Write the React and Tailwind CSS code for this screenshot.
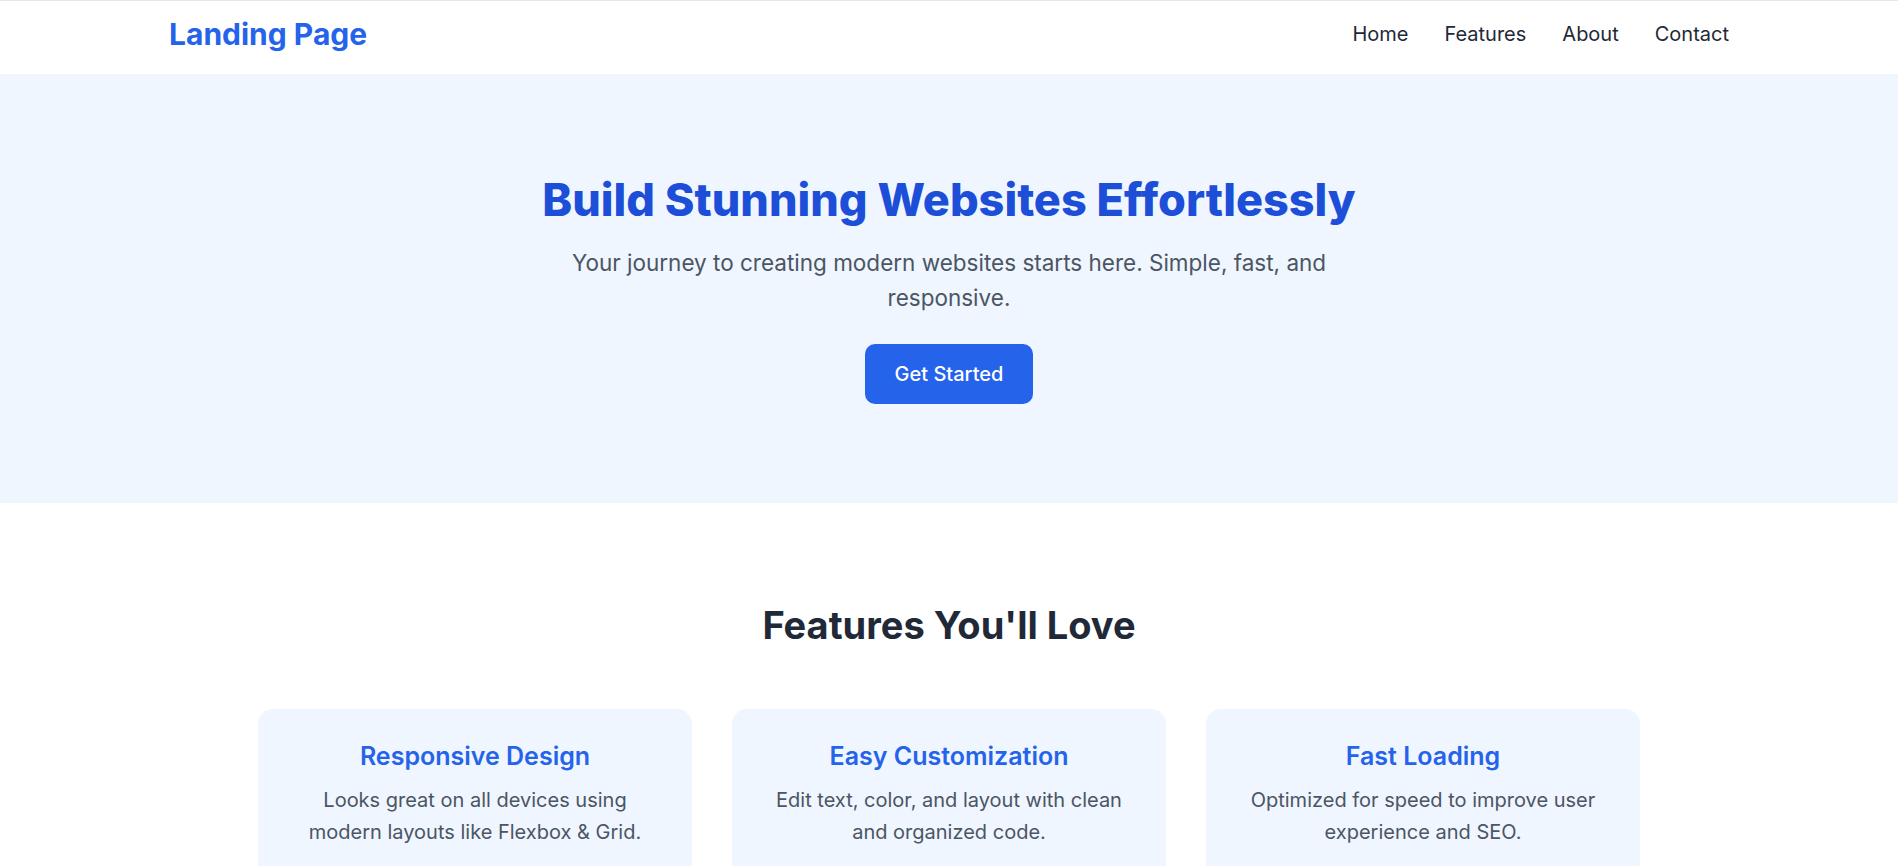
import React from 'react';

const features = [
    {
        title: 'Responsive Design',
        text: 'Looks great on all devices using modern layouts like Flexbox & Grid.',
    },
    {
        title: 'Easy Customization',
        text: 'Edit text, color, and layout with clean and organized code.',
    },
    {
        title: 'Fast Loading',
        text: 'Optimized for speed to improve user experience and SEO.',
    },
];

const App = () => {
    return (
        <div className="min-h-screen bg-white font-['Inter',sans-serif]">
            <header className="bg-white border-t border-[#e5e7eb]">
                <div className="max-w-[1600px] mx-auto px-5 pt-[13px] pb-5 flex items-center justify-between">
                    <a href="#" className="text-[30px] leading-[40px] font-bold text-[#2563eb]">
                        Landing Page
                    </a>
                    <nav className="flex items-center gap-[36px] text-[20px] leading-[30px] text-[#1f2937]">
                        <a href="#">Home</a>
                        <a href="#">Features</a>
                        <a href="#">About</a>
                        <a href="#">Contact</a>
                    </nav>
                </div>
            </header>

            <section className="bg-[#eff6ff] pt-[101px] pb-[99px] px-5 text-center">
                <h1 className="text-[45px] leading-[50px] font-extrabold text-[#1d4ed8] mb-5">
                    Build Stunning Websites Effortlessly
                </h1>
                <p className="max-w-[840px] mx-auto text-[22.5px] leading-[35px] text-[#4b5563] mb-[29px]">
                    Your journey to creating modern websites starts here. Simple, fast, and responsive.
                </p>
                <button className="bg-[#2563eb] text-white text-[20px] leading-[30px] font-medium px-[30px] py-[15px] rounded-[10px]">
                    Get Started
                </button>
            </section>

            <section className="pt-[100px] pb-[100px] px-5">
                <h2 className="text-[38px] leading-[45px] font-bold text-[#1f2937] text-center mb-[61px]">
                    Features You'll Love
                </h2>
                <div className="max-w-[1382px] mx-auto grid grid-cols-3 gap-10">
                    {features.map((f) => (
                        <div key={f.title} className="bg-[#eff6ff] rounded-[15px] p-[30px] text-center">
                            <h3 className="text-[25px] leading-[35px] font-semibold text-[#2563eb] mb-[10px]">
                                {f.title}
                            </h3>
                            <p className="text-[20px] leading-[32px] text-[#4b5563]">{f.text}</p>
                        </div>
                    ))}
                </div>
            </section>
        </div>
    );
};

export default App;
